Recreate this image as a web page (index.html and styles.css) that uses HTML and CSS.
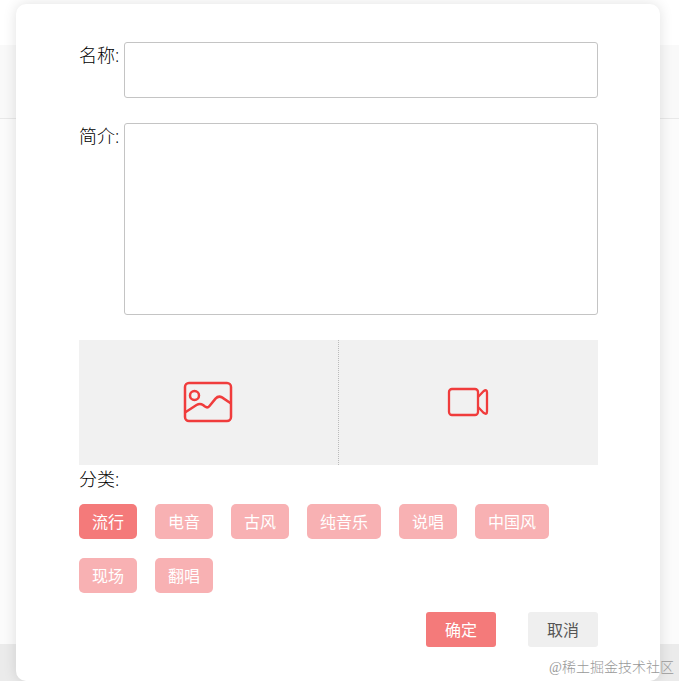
FILE: index.html
```html
<!DOCTYPE html>
<html lang="zh-CN">
<head>
  <meta charset="UTF-8" />
  <meta name="viewport" content="width=device-width, initial-scale=1.0"/>
  <title>发布</title>
  <link rel="stylesheet" href="styles.css">
</head>
<body>
  <!-- 背景页面 -->
  <div class="page">
    <div class="page-header"></div>
    <div class="page-nav"></div>
    <div class="page-main"></div>
    <div class="page-footer"></div>
  </div>

  <!-- 弹窗 -->
  <form class="dialog">
    <div class="field">
      <label for="name">名称:</label>
      <input type="text" id="name" class="name">
    </div>
    <div class="field">
      <label for="intro">简介:</label>
      <textarea id="intro" class="intro"></textarea>
    </div>

    <div class="upload">
      <button type="button" class="upload-item" aria-label="上传图片">
        <svg width="50" height="42" viewBox="0 0 50 42" fill="none" stroke="#f03c3c" stroke-width="2.5" stroke-linejoin="round">
          <rect x="2" y="2" width="46" height="38" rx="4"/>
          <circle cx="11.5" cy="14.5" r="4.5"/>
          <path d="M2 31.5 L13.5 24 Q17 21.8 20 24 L22 25.6 Q24.5 27.4 26.5 25 L32.5 17.6 Q35.5 14.4 39 16.4 L48 22.5"/>
        </svg>
      </button>
      <button type="button" class="upload-item" aria-label="上传视频">
        <svg width="42" height="30" viewBox="0 0 42 30" fill="none" stroke="#f03c3c" stroke-width="2.3" stroke-linejoin="round">
          <rect x="2" y="2" width="29" height="26" rx="3"/>
          <path d="M31 10 L36.5 4.2 Q40 1.8 40 5.5 V24.5 Q40 28.2 36.5 25.8 L31 20"/>
        </svg>
      </button>
    </div>

    <p class="category-title">分类:</p>
    <div class="category">
      <button type="button" class="tag active">流行</button>
      <button type="button" class="tag">电音</button>
      <button type="button" class="tag">古风</button>
      <button type="button" class="tag">纯音乐</button>
      <button type="button" class="tag">说唱</button>
      <button type="button" class="tag">中国风</button>
      <button type="button" class="tag">现场</button>
      <button type="button" class="tag">翻唱</button>
    </div>

    <div class="actions">
      <button type="button" class="btn confirm">确定</button>
      <button type="button" class="btn cancel">取消</button>
    </div>
  </form>

  <div class="watermark">@稀土掘金技术社区</div>
</body>
</html>
```

FILE: styles.css
```css
* {
  margin: 0;
  padding: 0;
  box-sizing: border-box;
}

body {
  min-height: 100vh;
  position: relative;
  display: flow-root;
  overflow: hidden;
  font-family: "Open Sans", "Noto Sans CJK SC", sans-serif;
  font-size: 16px;
  color: #000;
}

button {
  border: none;
  font: inherit;
  cursor: pointer;
}

/* 弹窗后面的页面 */
.page {
  position: absolute;
  inset: 0;
  display: flex;
  flex-direction: column;
  z-index: -1;
}

.page-header {
  height: 45px;
  background: #fff;
}

.page-nav {
  height: 74px;
  background: #f9f9f9;
  border-bottom: 1px solid #e8e8e8;
}

.page-main {
  flex: 1;
  background: #fbfbfb;
}

.page-footer {
  height: 37px;
  background: #ebebeb;
}

/* 弹窗 */
.dialog {
  margin: 4px 19px 0 16px;
  padding: 38px 62px 34px 63px;
  background: #fff;
  border-radius: 10px;
  box-shadow: 0 0 14px rgba(0, 0, 0, 0.12);
}

.field {
  display: flex;
  margin-bottom: 25px;
}

.field label {
  width: 45px;
  font-size: 18px;
  line-height: 26px;
  font-weight: 300;
}

.name,
.intro {
  flex: 1;
  min-width: 0;
  padding: 10px;
  border: 1px solid #c4c4c4;
  border-radius: 3px;
  background: #fff;
  font: inherit;
  outline: none;
}

.name {
  height: 56px;
}

.intro {
  height: 192px;
  resize: none;
}

/* 上传区域 */
.upload {
  display: flex;
  height: 125px;
  background: #f1f1f1;
}

.upload-item {
  flex: 1;
  display: flex;
  justify-content: center;
  align-items: center;
  padding: 0 2px 2px 0;
  background: none;
}

.upload-item + .upload-item {
  border-left: 1px dotted #bbb;
}

/* 分类 */
.category-title {
  margin-bottom: 11px;
  font-size: 18px;
  line-height: 28px;
  font-weight: 300;
}

.category {
  display: flex;
  flex-wrap: wrap;
  gap: 19px 18px;
}

.tag {
  height: 35px;
  padding: 0 13px 2px;
  border-radius: 5px;
  background: #f8b1b3;
  color: #fff;
}

.tag.active {
  background: #f47a7a;
}

/* 底部按钮 */
.actions {
  display: flex;
  justify-content: flex-end;
  gap: 32px;
  margin-top: 19px;
}

.btn {
  width: 70px;
  height: 35px;
  padding-bottom: 2px;
  border-radius: 3px;
}

.confirm {
  background: #f47a7a;
  color: #fff;
}

.cancel {
  background: #efefef;
  color: #555;
}

/* 水印 */
.watermark {
  position: absolute;
  right: 5px;
  bottom: 2px;
  font-family: "Liberation Serif", "Noto Sans CJK SC", serif;
  font-size: 14px;
  line-height: 22px;
  font-weight: 300;
  color: #999;
}
```
